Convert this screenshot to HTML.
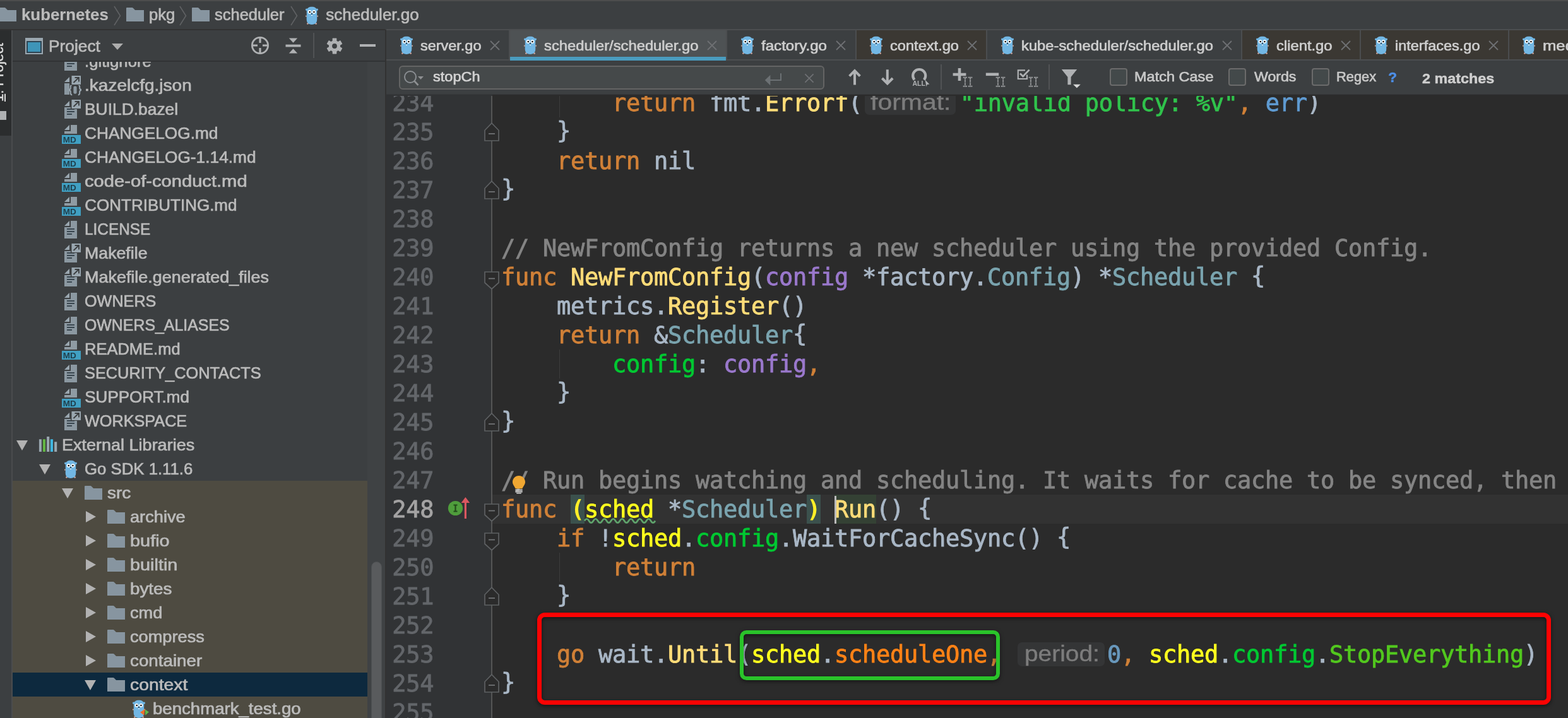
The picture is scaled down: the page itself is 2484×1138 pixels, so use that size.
<!DOCTYPE html><html><head><meta charset="utf-8"><title>scheduler.go - kubernetes</title><style>
*{box-sizing:border-box}
html,body{margin:0;padding:0;background:#2b2b2b}
body{width:2484px;height:1138px;overflow:hidden;position:relative;font-family:"Liberation Sans",sans-serif;color:#bbbbbb}
#root{position:absolute;left:0;top:0;width:2484px;height:1138px;overflow:hidden;will-change:transform}
.a{position:absolute}
.t{position:absolute;white-space:pre;line-height:30px;height:30px;font-size:26px;color:#bbbbbb;transform-origin:0 0}
.ln{position:absolute;left:611.3px;width:76px;text-align:right;font:37px/46px "DejaVu Sans Mono","Liberation Mono",monospace;letter-spacing:-0.276px;color:#63666a;height:46px;white-space:pre;-webkit-text-stroke:0.8px #63666a}
.cl{position:absolute;left:794px;font:37px/46px "DejaVu Sans Mono","Liberation Mono",monospace;letter-spacing:-0.276px;color:#a9b7c6;height:46px;white-space:pre;-webkit-text-stroke:0.85px}
.k{color:#d08037}.f{color:#ffdc78}.s{color:#30c34c}.c{color:#848484}.p{color:#9a78cc}.ty{color:#7aa4af}
.fd{color:#00c832}.r{color:#ffff1e}.so{color:#ff8216}.se{color:#52c81e}.n{color:#6897bb}.e{color:#5f9bd2}
.cl i{font-style:normal;position:relative;top:-2px}
.br{color:#ffef28;font-weight:bold;-webkit-text-stroke:0}
.hint{display:inline-block;position:relative;height:38px;vertical-align:top;margin-top:3px;background:#343536;border-radius:7px;letter-spacing:0;-webkit-text-stroke:0}
.hint b{position:absolute;left:0;top:-1px;font:normal 35px/38px "Liberation Sans",sans-serif;color:#7c7c7c;-webkit-text-stroke:0.4px #7c7c7c;transform-origin:0 0;white-space:pre}
</style></head><body><div id="root">
<div class="a" style="left:0;top:47px;width:610px;height:1091px;background:#3c3f41"></div>
<div class="a" style="left:20px;top:762px;width:562px;height:376px;background:#4e4b41"></div>
<div class="a" style="left:20px;top:1066px;width:562px;height:38px;background:#0d293e"></div>
<svg class="a" style="left:96px;top:80px" width="36" height="36" viewBox="-6 -4 36 36"><path d="M0 8L8 0V8Z" fill="#9aa7b0"/><path d="M10 0H20V28H0V10H10Z" fill="#8b98a1"/><rect x="4" y="12" width="12" height="1.9" fill="#36434c"/><rect x="4" y="16" width="12" height="1.9" fill="#36434c"/><rect x="4" y="20" width="8" height="1.9" fill="#36434c"/></svg>
<div class="t" style="left:134.28px;top:82.29px;font-size:26px;transform:scaleX(0.9894);-webkit-text-stroke:0.7px #bbbbbb;">.gitignore</div>
<svg class="a" style="left:96px;top:118px" width="36" height="36" viewBox="-6 -4 36 36"><path d="M0 8L8 0V8Z" fill="#9aa7b0"/><path d="M10 0H20V10H8V28H0V10H10Z" fill="#8b98a1"/><path d="M12.2 12.6C10.2 12.6 9.8 13.8 9.8 15.4V17.6C9.8 18.8 9.2 19.6 8 19.8V21.2C9.2 21.4 9.8 22.2 9.8 23.4V25.6C9.8 27.2 10.2 28.4 12.2 28.4" stroke="#9aa7b0" stroke-width="2" fill="none"/><path d="M21.8 12.6C23.8 12.6 24.2 13.8 24.2 15.4V17.6C24.2 18.8 24.8 19.6 26 19.8V21.2C24.8 21.4 24.2 22.2 24.2 23.4V25.6C24.2 27.2 23.8 28.4 21.8 28.4" stroke="#9aa7b0" stroke-width="2" fill="none"/><rect x="14.4" y="14.4" width="5.2" height="12.4" rx="2.4" fill="#8b98a1"/><rect x="10" y="-3" width="17" height="16" fill="#3c3f41"/><rect x="11.5" y="-2" width="14.5" height="14" fill="#9aa7b0"/><path d="M14.5 9L22.5 1.2M16.5 1H23V7.5" stroke="#3c3f41" stroke-width="1.9" fill="none"/></svg>
<div class="t" style="left:134.28px;top:120.29px;font-size:26px;transform:scaleX(1.0776);-webkit-text-stroke:0.7px #bbbbbb;">.kazelcfg.json</div>
<svg class="a" style="left:96px;top:156px" width="36" height="36" viewBox="-6 -4 36 36"><path d="M0 8L8 0V8Z" fill="#9aa7b0"/><path d="M10 0H20V28H0V10H10Z" fill="#8b98a1"/><rect x="4" y="12" width="12" height="1.9" fill="#36434c"/><rect x="4" y="16" width="12" height="1.9" fill="#36434c"/><rect x="4" y="20" width="8" height="1.9" fill="#36434c"/><rect x="10" y="-3" width="17" height="16" fill="#3c3f41"/><rect x="11.5" y="-2" width="14.5" height="14" fill="#9aa7b0"/><path d="M14.5 9L22.5 1.2M16.5 1H23V7.5" stroke="#3c3f41" stroke-width="1.9" fill="none"/></svg>
<div class="t" style="left:134.28px;top:158.29px;font-size:26px;transform:scaleX(1.0151);-webkit-text-stroke:0.7px #bbbbbb;">BUILD.bazel</div>
<svg class="a" style="left:96px;top:194px" width="36" height="36" viewBox="-6 -4 36 36"><path d="M0 8L8 0V8Z" fill="#9aa7b0"/><path d="M10 0H20V14H0V10H10Z" fill="#8f9ba3"/><rect x="-4" y="16" width="30" height="14" fill="#40a0c3"/><text x="-2.2" y="27.6" font-family="Liberation Sans,sans-serif" font-weight="bold" font-size="13.5" fill="#20414f" textLength="21" lengthAdjust="spacingAndGlyphs">MD</text></svg>
<div class="t" style="left:134.28px;top:196.29px;font-size:26px;transform:scaleX(1.0093);-webkit-text-stroke:0.7px #bbbbbb;">CHANGELOG.md</div>
<svg class="a" style="left:96px;top:232px" width="36" height="36" viewBox="-6 -4 36 36"><path d="M0 8L8 0V8Z" fill="#9aa7b0"/><path d="M10 0H20V14H0V10H10Z" fill="#8f9ba3"/><rect x="-4" y="16" width="30" height="14" fill="#40a0c3"/><text x="-2.2" y="27.6" font-family="Liberation Sans,sans-serif" font-weight="bold" font-size="13.5" fill="#20414f" textLength="21" lengthAdjust="spacingAndGlyphs">MD</text></svg>
<div class="t" style="left:134.28px;top:234.29px;font-size:26px;transform:scaleX(1.0104);-webkit-text-stroke:0.7px #bbbbbb;">CHANGELOG-1.14.md</div>
<svg class="a" style="left:96px;top:270px" width="36" height="36" viewBox="-6 -4 36 36"><path d="M0 8L8 0V8Z" fill="#9aa7b0"/><path d="M10 0H20V14H0V10H10Z" fill="#8f9ba3"/><rect x="-4" y="16" width="30" height="14" fill="#40a0c3"/><text x="-2.2" y="27.6" font-family="Liberation Sans,sans-serif" font-weight="bold" font-size="13.5" fill="#20414f" textLength="21" lengthAdjust="spacingAndGlyphs">MD</text></svg>
<div class="t" style="left:134.28px;top:272.29px;font-size:26px;transform:scaleX(1.1211);-webkit-text-stroke:0.7px #bbbbbb;">code-of-conduct.md</div>
<svg class="a" style="left:96px;top:308px" width="36" height="36" viewBox="-6 -4 36 36"><path d="M0 8L8 0V8Z" fill="#9aa7b0"/><path d="M10 0H20V14H0V10H10Z" fill="#8f9ba3"/><rect x="-4" y="16" width="30" height="14" fill="#40a0c3"/><text x="-2.2" y="27.6" font-family="Liberation Sans,sans-serif" font-weight="bold" font-size="13.5" fill="#20414f" textLength="21" lengthAdjust="spacingAndGlyphs">MD</text></svg>
<div class="t" style="left:134.28px;top:310.29px;font-size:26px;-webkit-text-stroke:0.7px #bbbbbb;">CONTRIBUTING.md</div>
<svg class="a" style="left:96px;top:346px" width="36" height="36" viewBox="-6 -4 36 36"><path d="M0 8L8 0V8Z" fill="#9aa7b0"/><path d="M10 0H20V28H0V10H10Z" fill="#8b98a1"/><rect x="4" y="12" width="12" height="1.9" fill="#36434c"/><rect x="4" y="16" width="12" height="1.9" fill="#36434c"/><rect x="4" y="20" width="8" height="1.9" fill="#36434c"/></svg>
<div class="t" style="left:134.28px;top:348.29px;font-size:26px;transform:scaleX(0.9382);-webkit-text-stroke:0.7px #bbbbbb;">LICENSE</div>
<svg class="a" style="left:96px;top:384px" width="36" height="36" viewBox="-6 -4 36 36"><path d="M0 8L8 0V8Z" fill="#9aa7b0"/><path d="M10 0H20V28H0V10H10Z" fill="#8b98a1"/><rect x="4" y="12" width="12" height="1.9" fill="#36434c"/><rect x="4" y="16" width="12" height="1.9" fill="#36434c"/><rect x="4" y="20" width="8" height="1.9" fill="#36434c"/><rect x="10" y="-3" width="17" height="16" fill="#3c3f41"/><rect x="11.5" y="-2" width="14.5" height="14" fill="#9aa7b0"/><path d="M14.5 9L22.5 1.2M16.5 1H23V7.5" stroke="#3c3f41" stroke-width="1.9" fill="none"/></svg>
<div class="t" style="left:134.28px;top:386.29px;font-size:26px;transform:scaleX(1.0282);-webkit-text-stroke:0.7px #bbbbbb;">Makefile</div>
<svg class="a" style="left:96px;top:422px" width="36" height="36" viewBox="-6 -4 36 36"><path d="M0 8L8 0V8Z" fill="#9aa7b0"/><path d="M10 0H20V28H0V10H10Z" fill="#8b98a1"/><rect x="4" y="12" width="12" height="1.9" fill="#36434c"/><rect x="4" y="16" width="12" height="1.9" fill="#36434c"/><rect x="4" y="20" width="8" height="1.9" fill="#36434c"/><rect x="10" y="-3" width="17" height="16" fill="#3c3f41"/><rect x="11.5" y="-2" width="14.5" height="14" fill="#9aa7b0"/><path d="M14.5 9L22.5 1.2M16.5 1H23V7.5" stroke="#3c3f41" stroke-width="1.9" fill="none"/></svg>
<div class="t" style="left:134.28px;top:424.29px;font-size:26px;transform:scaleX(1.0363);-webkit-text-stroke:0.7px #bbbbbb;">Makefile.generated_files</div>
<svg class="a" style="left:96px;top:460px" width="36" height="36" viewBox="-6 -4 36 36"><path d="M0 8L8 0V8Z" fill="#9aa7b0"/><path d="M10 0H20V28H0V10H10Z" fill="#8b98a1"/><rect x="4" y="12" width="12" height="1.9" fill="#36434c"/><rect x="4" y="16" width="12" height="1.9" fill="#36434c"/><rect x="4" y="20" width="8" height="1.9" fill="#36434c"/></svg>
<div class="t" style="left:134.28px;top:462.29px;font-size:26px;transform:scaleX(0.9692);-webkit-text-stroke:0.7px #bbbbbb;">OWNERS</div>
<svg class="a" style="left:96px;top:498px" width="36" height="36" viewBox="-6 -4 36 36"><path d="M0 8L8 0V8Z" fill="#9aa7b0"/><path d="M10 0H20V28H0V10H10Z" fill="#8b98a1"/><rect x="4" y="12" width="12" height="1.9" fill="#36434c"/><rect x="4" y="16" width="12" height="1.9" fill="#36434c"/><rect x="4" y="20" width="8" height="1.9" fill="#36434c"/></svg>
<div class="t" style="left:134.28px;top:500.29px;font-size:26px;transform:scaleX(0.9572);-webkit-text-stroke:0.7px #bbbbbb;">OWNERS_ALIASES</div>
<svg class="a" style="left:96px;top:536px" width="36" height="36" viewBox="-6 -4 36 36"><path d="M0 8L8 0V8Z" fill="#9aa7b0"/><path d="M10 0H20V14H0V10H10Z" fill="#8f9ba3"/><rect x="-4" y="16" width="30" height="14" fill="#40a0c3"/><text x="-2.2" y="27.6" font-family="Liberation Sans,sans-serif" font-weight="bold" font-size="13.5" fill="#20414f" textLength="21" lengthAdjust="spacingAndGlyphs">MD</text></svg>
<div class="t" style="left:134.28px;top:538.29px;font-size:26px;transform:scaleX(0.9807);-webkit-text-stroke:0.7px #bbbbbb;">README.md</div>
<svg class="a" style="left:96px;top:574px" width="36" height="36" viewBox="-6 -4 36 36"><path d="M0 8L8 0V8Z" fill="#9aa7b0"/><path d="M10 0H20V28H0V10H10Z" fill="#8b98a1"/><rect x="4" y="12" width="12" height="1.9" fill="#36434c"/><rect x="4" y="16" width="12" height="1.9" fill="#36434c"/><rect x="4" y="20" width="8" height="1.9" fill="#36434c"/></svg>
<div class="t" style="left:134.28px;top:576.29px;font-size:26px;transform:scaleX(0.9746);-webkit-text-stroke:0.7px #bbbbbb;">SECURITY_CONTACTS</div>
<svg class="a" style="left:96px;top:612px" width="36" height="36" viewBox="-6 -4 36 36"><path d="M0 8L8 0V8Z" fill="#9aa7b0"/><path d="M10 0H20V14H0V10H10Z" fill="#8f9ba3"/><rect x="-4" y="16" width="30" height="14" fill="#40a0c3"/><text x="-2.2" y="27.6" font-family="Liberation Sans,sans-serif" font-weight="bold" font-size="13.5" fill="#20414f" textLength="21" lengthAdjust="spacingAndGlyphs">MD</text></svg>
<div class="t" style="left:134.28px;top:614.29px;font-size:26px;-webkit-text-stroke:0.7px #bbbbbb;">SUPPORT.md</div>
<svg class="a" style="left:96px;top:650px" width="36" height="36" viewBox="-6 -4 36 36"><path d="M0 8L8 0V8Z" fill="#9aa7b0"/><path d="M10 0H20V28H0V10H10Z" fill="#8b98a1"/><rect x="4" y="12" width="12" height="1.9" fill="#36434c"/><rect x="4" y="16" width="12" height="1.9" fill="#36434c"/><rect x="4" y="20" width="8" height="1.9" fill="#36434c"/><rect x="10" y="-3" width="17" height="16" fill="#3c3f41"/><rect x="11.5" y="-2" width="14.5" height="14" fill="#9aa7b0"/><path d="M14.5 9L22.5 1.2M16.5 1H23V7.5" stroke="#3c3f41" stroke-width="1.9" fill="none"/></svg>
<div class="t" style="left:134.28px;top:652.29px;font-size:26px;transform:scaleX(0.9707);-webkit-text-stroke:0.7px #bbbbbb;">WORKSPACE</div>
<svg class="a" style="left:26px;top:698px" width="18" height="16" viewBox="0 0 18 16"><path d="M0 0H18L9 16Z" fill="#b2b2b2"/></svg>
<svg class="a" style="left:61px;top:691px" width="30" height="26" viewBox="61 691 30 26"><rect x="61.9" y="696.2" width="4" height="19.8" fill="#9aa7b0"/><rect x="67.9" y="696.2" width="4.1" height="19.8" fill="#62b543"/><rect x="74.1" y="692" width="4.1" height="24" fill="#9aa7b0"/><rect x="79.9" y="696.2" width="4.1" height="19.8" fill="#40b6e0"/><rect x="86.1" y="700.3" width="4.1" height="15.7" fill="#9aa7b0"/></svg>
<div class="t" style="left:98.28px;top:690.29px;font-size:26px;transform:scaleX(1.0388);-webkit-text-stroke:0.7px #bbbbbb;">External Libraries</div>
<svg class="a" style="left:62px;top:736px" width="18" height="16" viewBox="0 0 18 16"><path d="M0 0H18L9 16Z" fill="#b2b2b2"/></svg>
<svg class="a" style="left:102px;top:729px" width="20.0" height="30.0" viewBox="0 0 20 30">
<circle cx="1.7" cy="5.3" r="1.7" fill="#72b7e4"/><circle cx="18.3" cy="5.3" r="1.7" fill="#72b7e4"/>
<ellipse cx="0.9" cy="15.6" rx="0.95" ry="1.2" fill="#d9aca2"/><ellipse cx="19.1" cy="15.6" rx="0.95" ry="1.2" fill="#d9aca2"/>
<ellipse cx="3.4" cy="27.6" rx="1.3" ry="1.25" fill="#d9aca2"/><ellipse cx="16.6" cy="27.6" rx="1.3" ry="1.25" fill="#d9aca2"/>
<path d="M10 0.8C5.5 0.8 2.3 2.8 1.9 6.5C1.7 9 1.9 12 1.8 15.5C1.7 19 1.6 21 2 23.3C2.8 27 5.8 28.9 10 28.9C14.2 28.9 17.2 27 18 23.3C18.4 21 18.3 19 18.2 15.5C18.1 12 18.3 9 18.1 6.5C17.7 2.8 14.5 0.8 10 0.8Z" fill="#72b7e4"/>
<circle cx="6.55" cy="8.9" r="2.8" fill="#fff"/><circle cx="13.45" cy="8.9" r="2.8" fill="#fff"/>
<circle cx="6.75" cy="9.05" r="1.3" fill="#0a0a0a"/><circle cx="13.4" cy="9.05" r="1.3" fill="#0a0a0a"/>
<ellipse cx="10" cy="11.9" rx="1.0" ry="0.85" fill="#1c1c24"/><rect x="9" y="13.7" width="2.1" height="1.3" rx="0.4" fill="#f4f4f0"/>
</svg>
<div class="t" style="left:134.28px;top:728.29px;font-size:26px;transform:scaleX(0.9906);-webkit-text-stroke:0.7px #bbbbbb;">Go SDK 1.11.6</div>
<svg class="a" style="left:98px;top:774px" width="18" height="16" viewBox="0 0 18 16"><path d="M0 0H18L9 16Z" fill="#b2b2b2"/></svg>
<svg class="a" style="left:134px;top:770px" width="28" height="22" viewBox="0 0 28 22"><path d="M0 1Q0 0 1 0H9.2Q10.2 0 10.8 0.7L14 4H28V22H0Z" fill="#8795a0"/></svg>
<div class="t" style="left:170.28px;top:766.29px;font-size:26px;transform:scaleX(1.0782);-webkit-text-stroke:0.7px #bbbbbb;">src</div>
<svg class="a" style="left:136px;top:810px" width="16" height="18" viewBox="0 0 16 18"><path d="M0 0L16 9L0 18Z" fill="#b2b2b2"/></svg>
<svg class="a" style="left:170px;top:808px" width="28" height="22" viewBox="0 0 28 22"><path d="M0 1Q0 0 1 0H9.2Q10.2 0 10.8 0.7L14 4H28V22H0Z" fill="#8795a0"/></svg>
<div class="t" style="left:206.28px;top:804.29px;font-size:26px;transform:scaleX(1.0458);-webkit-text-stroke:0.7px #bbbbbb;">archive</div>
<svg class="a" style="left:136px;top:848px" width="16" height="18" viewBox="0 0 16 18"><path d="M0 0L16 9L0 18Z" fill="#b2b2b2"/></svg>
<svg class="a" style="left:170px;top:846px" width="28" height="22" viewBox="0 0 28 22"><path d="M0 1Q0 0 1 0H9.2Q10.2 0 10.8 0.7L14 4H28V22H0Z" fill="#8795a0"/></svg>
<div class="t" style="left:206.28px;top:842.29px;font-size:26px;transform:scaleX(1.1118);-webkit-text-stroke:0.7px #bbbbbb;">bufio</div>
<svg class="a" style="left:136px;top:886px" width="16" height="18" viewBox="0 0 16 18"><path d="M0 0L16 9L0 18Z" fill="#b2b2b2"/></svg>
<svg class="a" style="left:170px;top:884px" width="28" height="22" viewBox="0 0 28 22"><path d="M0 1Q0 0 1 0H9.2Q10.2 0 10.8 0.7L14 4H28V22H0Z" fill="#8795a0"/></svg>
<div class="t" style="left:206.28px;top:880.29px;font-size:26px;transform:scaleX(1.1098);-webkit-text-stroke:0.7px #bbbbbb;">builtin</div>
<svg class="a" style="left:136px;top:924px" width="16" height="18" viewBox="0 0 16 18"><path d="M0 0L16 9L0 18Z" fill="#b2b2b2"/></svg>
<svg class="a" style="left:170px;top:922px" width="28" height="22" viewBox="0 0 28 22"><path d="M0 1Q0 0 1 0H9.2Q10.2 0 10.8 0.7L14 4H28V22H0Z" fill="#8795a0"/></svg>
<div class="t" style="left:206.28px;top:918.29px;font-size:26px;transform:scaleX(1.0680);-webkit-text-stroke:0.7px #bbbbbb;">bytes</div>
<svg class="a" style="left:136px;top:962px" width="16" height="18" viewBox="0 0 16 18"><path d="M0 0L16 9L0 18Z" fill="#b2b2b2"/></svg>
<svg class="a" style="left:170px;top:960px" width="28" height="22" viewBox="0 0 28 22"><path d="M0 1Q0 0 1 0H9.2Q10.2 0 10.8 0.7L14 4H28V22H0Z" fill="#8795a0"/></svg>
<div class="t" style="left:206.28px;top:956.29px;font-size:26px;transform:scaleX(1.0443);-webkit-text-stroke:0.7px #bbbbbb;">cmd</div>
<svg class="a" style="left:136px;top:1000px" width="16" height="18" viewBox="0 0 16 18"><path d="M0 0L16 9L0 18Z" fill="#b2b2b2"/></svg>
<svg class="a" style="left:170px;top:998px" width="28" height="22" viewBox="0 0 28 22"><path d="M0 1Q0 0 1 0H9.2Q10.2 0 10.8 0.7L14 4H28V22H0Z" fill="#8795a0"/></svg>
<div class="t" style="left:206.28px;top:994.29px;font-size:26px;transform:scaleX(1.0459);-webkit-text-stroke:0.7px #bbbbbb;">compress</div>
<svg class="a" style="left:136px;top:1038px" width="16" height="18" viewBox="0 0 16 18"><path d="M0 0L16 9L0 18Z" fill="#b2b2b2"/></svg>
<svg class="a" style="left:170px;top:1036px" width="28" height="22" viewBox="0 0 28 22"><path d="M0 1Q0 0 1 0H9.2Q10.2 0 10.8 0.7L14 4H28V22H0Z" fill="#8795a0"/></svg>
<div class="t" style="left:206.28px;top:1032.29px;font-size:26px;transform:scaleX(1.0678);-webkit-text-stroke:0.7px #bbbbbb;">container</div>
<svg class="a" style="left:134px;top:1078px" width="18" height="16" viewBox="0 0 18 16"><path d="M0 0H18L9 16Z" fill="#b2b2b2"/></svg>
<svg class="a" style="left:170px;top:1074px" width="28" height="22" viewBox="0 0 28 22"><path d="M0 1Q0 0 1 0H9.2Q10.2 0 10.8 0.7L14 4H28V22H0Z" fill="#8795a0"/></svg>
<div class="t" style="left:206.28px;top:1070.29px;font-size:26px;transform:scaleX(1.0894);-webkit-text-stroke:0.7px #bbbbbb;">context</div>
<svg class="a" style="left:210px;top:1109px" width="20.0" height="30.0" viewBox="0 0 20 30">
<circle cx="1.7" cy="5.3" r="1.7" fill="#72b7e4"/><circle cx="18.3" cy="5.3" r="1.7" fill="#72b7e4"/>
<ellipse cx="0.9" cy="15.6" rx="0.95" ry="1.2" fill="#d9aca2"/><ellipse cx="19.1" cy="15.6" rx="0.95" ry="1.2" fill="#d9aca2"/>
<ellipse cx="3.4" cy="27.6" rx="1.3" ry="1.25" fill="#d9aca2"/><ellipse cx="16.6" cy="27.6" rx="1.3" ry="1.25" fill="#d9aca2"/>
<path d="M10 0.8C5.5 0.8 2.3 2.8 1.9 6.5C1.7 9 1.9 12 1.8 15.5C1.7 19 1.6 21 2 23.3C2.8 27 5.8 28.9 10 28.9C14.2 28.9 17.2 27 18 23.3C18.4 21 18.3 19 18.2 15.5C18.1 12 18.3 9 18.1 6.5C17.7 2.8 14.5 0.8 10 0.8Z" fill="#72b7e4"/>
<circle cx="6.55" cy="8.9" r="2.8" fill="#fff"/><circle cx="13.45" cy="8.9" r="2.8" fill="#fff"/>
<circle cx="6.75" cy="9.05" r="1.3" fill="#0a0a0a"/><circle cx="13.4" cy="9.05" r="1.3" fill="#0a0a0a"/>
<ellipse cx="10" cy="11.9" rx="1.0" ry="0.85" fill="#1c1c24"/><rect x="9" y="13.7" width="2.1" height="1.3" rx="0.4" fill="#f4f4f0"/>
</svg>
<svg class="a" style="left:220px;top:1120px" width="18" height="18" viewBox="220 1120 18 18"><path d="M222 1128.9L229.7 1123.8L228.3 1133.8Z" fill="#ee6f2d"/><path d="M229.9 1124.6L236 1128.6L230.2 1133.8Z" fill="#5fb84a"/></svg>
<div class="t" style="left:242.28px;top:1108.29px;font-size:26px;transform:scaleX(1.0612);-webkit-text-stroke:0.7px #bbbbbb;">benchmark_test.go</div>
<div class="a" style="left:582px;top:98px;width:28px;height:1040px;background:#3f4244"></div>
<div class="a" style="left:587.5px;top:890px;width:17px;height:260px;background:#595b5d;border-radius:9px;border:1px solid #4c4f51"></div>
<div class="a" style="left:0;top:47px;width:18px;height:1091px;background:#3c3f41"></div>
<div class="a" style="left:0;top:47px;width:18px;height:168px;background:#2b2d2e;overflow:hidden"><div class="a" style="left:-14px;top:113.5px;width:120px;height:24px;line-height:24px;font-size:22px;color:#dadada;-webkit-text-stroke:0.5px #dadada;white-space:pre;transform-origin:0 0;transform:rotate(-90deg)"><u>1</u>: Project</div><div class="a" style="left:0;top:129px;width:10px;height:14px;background:#afb1b3"></div></div>
<div class="a" style="left:18px;top:47px;width:2px;height:1091px;background:#4a4c4e"></div>
<div class="a" style="left:0;top:0;width:2484px;height:46px;background:#3c3f41"></div>
<div class="a" style="left:0;top:0;width:2484px;height:2px;background:#4d4d4d"></div>
<div class="a" style="left:0;top:46px;width:611px;height:1.5px;background:#323232"></div>
<svg class="a" style="left:-2px;top:12px" width="28" height="22" viewBox="0 0 28 22"><path d="M0 1Q0 0 1 0H9.2Q10.2 0 10.8 0.7L14 4H28V22H0Z" fill="#8795a0"/></svg>
<div class="t" style="left:33.58px;top:8.39px;font-size:26px;transform:scaleX(0.9932);font-weight:bold;-webkit-text-stroke:0.2px #bbbbbb;">kubernetes</div>
<svg class="a" style="left:180px;top:9px" width="12" height="32" viewBox="0 0 12 32"><path d="M1 1L10.5 16L1 31" stroke="#606264" stroke-width="1.6" fill="none"/></svg>
<svg class="a" style="left:200px;top:12px" width="28" height="22" viewBox="0 0 28 22"><path d="M0 1Q0 0 1 0H9.2Q10.2 0 10.8 0.7L14 4H28V22H0Z" fill="#8795a0"/></svg>
<div class="t" style="left:235.78px;top:8.39px;font-size:26px;transform:scaleX(0.9854);-webkit-text-stroke:0.7px #bbbbbb;">pkg</div>
<svg class="a" style="left:284px;top:9px" width="12" height="32" viewBox="0 0 12 32"><path d="M1 1L10.5 16L1 31" stroke="#606264" stroke-width="1.6" fill="none"/></svg>
<svg class="a" style="left:304px;top:12px" width="28" height="22" viewBox="0 0 28 22"><path d="M0 1Q0 0 1 0H9.2Q10.2 0 10.8 0.7L14 4H28V22H0Z" fill="#8795a0"/></svg>
<div class="t" style="left:339.78px;top:8.39px;font-size:26px;transform:scaleX(0.9805);-webkit-text-stroke:0.7px #bbbbbb;">scheduler</div>
<svg class="a" style="left:460px;top:9px" width="12" height="32" viewBox="0 0 12 32"><path d="M1 1L10.5 16L1 31" stroke="#606264" stroke-width="1.6" fill="none"/></svg>
<svg class="a" style="left:484px;top:10px" width="20.0" height="30.0" viewBox="0 0 20 30">
<circle cx="1.7" cy="5.3" r="1.7" fill="#72b7e4"/><circle cx="18.3" cy="5.3" r="1.7" fill="#72b7e4"/>
<ellipse cx="0.9" cy="15.6" rx="0.95" ry="1.2" fill="#d9aca2"/><ellipse cx="19.1" cy="15.6" rx="0.95" ry="1.2" fill="#d9aca2"/>
<ellipse cx="3.4" cy="27.6" rx="1.3" ry="1.25" fill="#d9aca2"/><ellipse cx="16.6" cy="27.6" rx="1.3" ry="1.25" fill="#d9aca2"/>
<path d="M10 0.8C5.5 0.8 2.3 2.8 1.9 6.5C1.7 9 1.9 12 1.8 15.5C1.7 19 1.6 21 2 23.3C2.8 27 5.8 28.9 10 28.9C14.2 28.9 17.2 27 18 23.3C18.4 21 18.3 19 18.2 15.5C18.1 12 18.3 9 18.1 6.5C17.7 2.8 14.5 0.8 10 0.8Z" fill="#72b7e4"/>
<circle cx="6.55" cy="8.9" r="2.8" fill="#fff"/><circle cx="13.45" cy="8.9" r="2.8" fill="#fff"/>
<circle cx="6.75" cy="9.05" r="1.3" fill="#0a0a0a"/><circle cx="13.4" cy="9.05" r="1.3" fill="#0a0a0a"/>
<ellipse cx="10" cy="11.9" rx="1.0" ry="0.85" fill="#1c1c24"/><rect x="9" y="13.7" width="2.1" height="1.3" rx="0.4" fill="#f4f4f0"/>
</svg>
<div class="t" style="left:516.28px;top:8.39px;font-size:26px;-webkit-text-stroke:0.7px #bbbbbb;">scheduler.go</div>
<div class="a" style="left:20px;top:47.5px;width:590px;height:49px;background:#3c3f41"></div>
<div class="a" style="left:20px;top:96px;width:590px;height:2px;background:#313335"></div>
<svg class="a" style="left:40px;top:60px" width="28" height="26" viewBox="0 0 28 26"><rect x="0" y="0" width="28" height="26" fill="#9aa7b0"/><rect x="2" y="5" width="24" height="19" fill="#2d4452"/><rect x="4" y="7" width="20" height="15" fill="#3e95b8"/></svg>
<div class="t" style="left:77.28px;top:57.99px;font-size:26px;transform:scaleX(1.0119);-webkit-text-stroke:0.7px #bbbbbb;">Project</div>
<svg class="a" style="left:177px;top:69px" width="18" height="10" viewBox="0 0 18 10"><path d="M0 0H18L9 10Z" fill="#adadad"/></svg>
<svg class="a" style="left:397px;top:57px" width="30" height="30" viewBox="0 0 30 30"><circle cx="15" cy="15" r="12.6" stroke="#afb1b3" stroke-width="2.8" fill="none"/><path d="M15 2V11M15 19V28M2 15H11M19 15H28" stroke="#afb1b3" stroke-width="3.2"/></svg>
<svg class="a" style="left:451.5px;top:59px" width="25" height="27" viewBox="0 0 26 28"><path d="M6 1.5H20L13 9Z" fill="#afb1b3"/><rect x="0.5" y="12" width="25" height="4" fill="#afb1b3"/><path d="M6 26.5H20L13 19Z" fill="#afb1b3"/></svg>
<div class="a" style="left:496px;top:52px;width:2px;height:40px;background:#515355"></div>
<svg class="a" style="left:517px;top:59.6px" width="26" height="26" viewBox="-14 -14 28 28"><g fill="#afb1b3"><rect x="-3.6" y="-13.4" width="7.2" height="8" rx="0.8" transform="rotate(0)"/><rect x="-3.6" y="-13.4" width="7.2" height="8" rx="0.8" transform="rotate(60)"/><rect x="-3.6" y="-13.4" width="7.2" height="8" rx="0.8" transform="rotate(120)"/><rect x="-3.6" y="-13.4" width="7.2" height="8" rx="0.8" transform="rotate(180)"/><rect x="-3.6" y="-13.4" width="7.2" height="8" rx="0.8" transform="rotate(240)"/><rect x="-3.6" y="-13.4" width="7.2" height="8" rx="0.8" transform="rotate(300)"/></g><circle r="7" stroke="#afb1b3" stroke-width="5.6" fill="none"/></svg>
<div class="a" style="left:570px;top:70px;width:24.5px;height:4px;background:#afb1b3"></div>
<div class="a" style="left:610px;top:150px;width:1874px;height:988px;background:#2b2b2b"></div>
<div class="a" style="left:610px;top:150px;width:169px;height:988px;background:#313335"></div>
<div class="a" style="left:779px;top:784px;width:1705px;height:46px;background:#323232"></div>
<div class="a" style="left:778px;top:150px;width:2px;height:988px;background:#555555"></div>
<div class="ln" style="top:141px;">234</div>
<div class="ln" style="top:187px;">235</div>
<div class="ln" style="top:233px;">236</div>
<div class="ln" style="top:279px;">237</div>
<div class="ln" style="top:325px;">238</div>
<div class="ln" style="top:371px;">239</div>
<div class="ln" style="top:417px;">240</div>
<div class="ln" style="top:463px;">241</div>
<div class="ln" style="top:509px;">242</div>
<div class="ln" style="top:555px;">243</div>
<div class="ln" style="top:601px;">244</div>
<div class="ln" style="top:647px;">245</div>
<div class="ln" style="top:693px;">246</div>
<div class="ln" style="top:739px;">247</div>
<div class="ln" style="top:785px;color:#a4a3a3;-webkit-text-stroke-color:#a4a3a3;">248</div>
<div class="ln" style="top:831px;">249</div>
<div class="ln" style="top:877px;">250</div>
<div class="ln" style="top:923px;">251</div>
<div class="ln" style="top:969px;">252</div>
<div class="ln" style="top:1015px;">253</div>
<div class="ln" style="top:1061px;">254</div>
<div class="ln" style="top:1107px;">255</div>
<div class="a" style="left:885.5px;top:140px;width:1px;height:46px;background:#3c3c3c"></div>
<div class="a" style="left:885.5px;top:554px;width:1px;height:46px;background:#3c3c3c"></div>
<div class="a" style="left:885.5px;top:876px;width:1px;height:46px;background:#3c3c3c"></div>
<div class="a" style="left:904px;top:784px;width:22px;height:46px;background:#3b514d"></div>
<div class="a" style="left:1278px;top:784px;width:22px;height:46px;background:#3b514d"></div>
<div class="a" style="left:1322px;top:784px;width:66px;height:46px;background:#344134"></div>
<div class="cl" style="top:141px">        <span class="k">return</span> fmt.<span class="f">Errorf</span>(<span class="hint" style="width:144.5px;margin-left:3.7px;margin-right:6.5px"><b style="left:9.5px;transform:scaleX(1.17)">format:</b></span><span class="s">&quot;invalid policy: %v&quot;</span><span class="k">,</span> <span class="e">err</span>)</div>
<div class="cl" style="top:187px">    <i>}</i></div>
<div class="cl" style="top:233px">    <span class="k">return</span> nil</div>
<div class="cl" style="top:279px"><i>}</i></div>
<div class="cl" style="top:371px"><span class="c">// NewFromConfig returns a new scheduler using the provided Config.</span></div>
<div class="cl" style="top:417px"><span class="k">func</span> <span class="f">NewFromConfig</span>(<span class="p">config</span> *factory.<span class="ty">Config</span>) *<span class="ty">Scheduler</span> <i>{</i></div>
<div class="cl" style="top:463px">    metrics.<span class="f">Register</span>()</div>
<div class="cl" style="top:509px">    <span class="k">return</span> &amp;<span class="ty">Scheduler</span><i>{</i></div>
<div class="cl" style="top:555px">        <span class="fd">config</span>: <span class="p">config</span><span class="k">,</span></div>
<div class="cl" style="top:601px">    <i>}</i></div>
<div class="cl" style="top:647px"><i>}</i></div>
<div class="cl" style="top:739px"><span class="c">// Run begins watching and scheduling. It waits for cache to be synced, then</span></div>
<div class="cl" style="top:785px"><span class="k">func</span> <span class="br">(</span><span class="r">sched</span> *<span class="ty">Scheduler</span><span class="br">)</span> <span class="f">Run</span>() <i>{</i></div>
<div class="cl" style="top:831px">    <span class="k">if</span> !<span class="r">sched</span>.<span class="fd">config</span>.WaitForCacheSync() <i>{</i></div>
<div class="cl" style="top:877px">        <span class="k">return</span></div>
<div class="cl" style="top:923px">    <i>}</i></div>
<div class="cl" style="top:1015px">    <span class="k">go</span> wait.<span class="f">Until</span>(<span class="r">sched</span>.<span class="so">scheduleOne</span><span class="k">,</span> <span class="hint" style="width:138px;margin-left:4px;margin-right:4px"><b style="left:11px;transform:scaleX(1.11)">period:</b></span><span class="n">0</span><span class="k">,</span> <span class="r">sched</span>.<span class="fd">config</span>.<span class="se">StopEverything</span>)</div>
<div class="cl" style="top:1061px"><i>}</i></div>
<svg class="a" style="left:0;top:0" width="2484" height="1138"><path d="M926 825.5 q3.5 -6 7 0 q3.5 6 7 0 q3.5 -6 7 0 q3.5 6 7 0 q3.5 -6 7 0 q3.5 6 7 0 q3.5 -6 7 0 q3.5 6 7 0 q3.5 -6 7 0 q3.5 6 7 0 q3.5 -6 7 0 q3.5 6 7 0 q3.5 -6 7 0 q3.5 6 7 0 q3.5 -6 7 0 q3.5 6 7 0" stroke="#5fa46c" stroke-width="2.7" fill="none"/></svg>
<div class="a" style="left:1322px;top:786px;width:3px;height:44px;background:#bbbbbb"></div>
<svg class="a" style="left:767px;top:194px" width="24" height="30" viewBox="0 0 24 30"><path d="M1 29V12.5L12 1.2L23 12.5V29Z" fill="#2b2b2b" stroke="#5e6163" stroke-width="1.7"/><path d="M7 18H17" stroke="#747779" stroke-width="1.7"/></svg>
<svg class="a" style="left:767px;top:286px" width="24" height="30" viewBox="0 0 24 30"><path d="M1 29V12.5L12 1.2L23 12.5V29Z" fill="#2b2b2b" stroke="#5e6163" stroke-width="1.7"/><path d="M7 18H17" stroke="#747779" stroke-width="1.7"/></svg>
<svg class="a" style="left:767px;top:430px" width="24" height="29" viewBox="0 0 24 29"><path d="M1 1H23V18L12 28L1 18Z" fill="#2b2b2b" stroke="#5e6163" stroke-width="1.7"/><path d="M7 11.5H17" stroke="#747779" stroke-width="1.7"/></svg>
<svg class="a" style="left:767px;top:654px" width="24" height="30" viewBox="0 0 24 30"><path d="M1 29V12.5L12 1.2L23 12.5V29Z" fill="#2b2b2b" stroke="#5e6163" stroke-width="1.7"/><path d="M7 18H17" stroke="#747779" stroke-width="1.7"/></svg>
<svg class="a" style="left:767px;top:798px" width="24" height="29" viewBox="0 0 24 29"><path d="M1 1H23V18L12 28L1 18Z" fill="#2b2b2b" stroke="#5e6163" stroke-width="1.7"/><path d="M7 11.5H17" stroke="#747779" stroke-width="1.7"/></svg>
<svg class="a" style="left:767px;top:844px" width="24" height="29" viewBox="0 0 24 29"><path d="M1 1H23V18L12 28L1 18Z" fill="#2b2b2b" stroke="#5e6163" stroke-width="1.7"/><path d="M7 11.5H17" stroke="#747779" stroke-width="1.7"/></svg>
<svg class="a" style="left:767px;top:930px" width="24" height="30" viewBox="0 0 24 30"><path d="M1 29V12.5L12 1.2L23 12.5V29Z" fill="#2b2b2b" stroke="#5e6163" stroke-width="1.7"/><path d="M7 18H17" stroke="#747779" stroke-width="1.7"/></svg>
<svg class="a" style="left:767px;top:1068px" width="24" height="30" viewBox="0 0 24 30"><path d="M1 29V12.5L12 1.2L23 12.5V29Z" fill="#2b2b2b" stroke="#5e6163" stroke-width="1.7"/><path d="M7 18H17" stroke="#747779" stroke-width="1.7"/></svg>
<svg class="a" style="left:708px;top:786px" width="40" height="40" viewBox="0 0 40 40"><circle cx="13.5" cy="19.5" r="11.6" fill="#4f9d3c"/><path d="M10.5 14.5h6M13.5 14.5v10M10.5 24.5h6" stroke="#234a1a" stroke-width="2.2" fill="none"/><path d="M29.4 36V8" stroke="#db5860" stroke-width="3.2"/><path d="M22.6 11L29.4 2L36.2 11Z" fill="#db5860"/></svg>
<svg class="a" style="left:808px;top:750px" width="28" height="36" viewBox="0 0 28 36"><path d="M14 4C8.2 4 4 8.6 4 14C4 18.2 7 20.5 8.6 24.4H19.4C21 20.5 24 18.2 24 14C24 8.6 19.8 4 14 4Z" fill="#f0a732"/><rect x="8.3" y="25.6" width="11.4" height="2" fill="#d4d4d4"/><rect x="8.3" y="28.4" width="11.4" height="2" fill="#d4d4d4"/><rect x="10" y="31" width="8" height="1.6" rx="0.8" fill="#d4d4d4"/></svg>
<div class="a" style="left:850.7px;top:971px;width:1606px;height:146.2px;border:7.2px solid #fc0303;border-radius:12px;filter:drop-shadow(0 2px 3px rgba(0,0,0,.55))"></div>
<div class="a" style="left:1171.6px;top:999.2px;width:412px;height:79px;border:6.6px solid #2ac32a;border-radius:10.5px;filter:drop-shadow(0 2px 3px rgba(0,0,0,.55))"></div>
<div class="a" style="left:610px;top:46px;width:1874px;height:50px;background:#3c3f41"></div>
<div class="a" style="left:612px;top:45.8px;width:1872px;height:2px;background:#4c4e50"></div>
<div class="a" style="left:612px;top:94.2px;width:1872px;height:2px;background:#4c4e50"></div>
<svg class="a" style="left:634px;top:57px" width="20.0" height="30.0" viewBox="0 0 20 30">
<circle cx="1.7" cy="5.3" r="1.7" fill="#72b7e4"/><circle cx="18.3" cy="5.3" r="1.7" fill="#72b7e4"/>
<ellipse cx="0.9" cy="15.6" rx="0.95" ry="1.2" fill="#d9aca2"/><ellipse cx="19.1" cy="15.6" rx="0.95" ry="1.2" fill="#d9aca2"/>
<ellipse cx="3.4" cy="27.6" rx="1.3" ry="1.25" fill="#d9aca2"/><ellipse cx="16.6" cy="27.6" rx="1.3" ry="1.25" fill="#d9aca2"/>
<path d="M10 0.8C5.5 0.8 2.3 2.8 1.9 6.5C1.7 9 1.9 12 1.8 15.5C1.7 19 1.6 21 2 23.3C2.8 27 5.8 28.9 10 28.9C14.2 28.9 17.2 27 18 23.3C18.4 21 18.3 19 18.2 15.5C18.1 12 18.3 9 18.1 6.5C17.7 2.8 14.5 0.8 10 0.8Z" fill="#72b7e4"/>
<circle cx="6.55" cy="8.9" r="2.8" fill="#fff"/><circle cx="13.45" cy="8.9" r="2.8" fill="#fff"/>
<circle cx="6.75" cy="9.05" r="1.3" fill="#0a0a0a"/><circle cx="13.4" cy="9.05" r="1.3" fill="#0a0a0a"/>
<ellipse cx="10" cy="11.9" rx="1.0" ry="0.85" fill="#1c1c24"/><rect x="9" y="13.7" width="2.1" height="1.3" rx="0.4" fill="#f4f4f0"/>
</svg>
<div class="t" style="left:666.28px;top:57.77px;font-size:22.6px;transform:scaleX(1.0379);color:#cdcdcd;-webkit-text-stroke:0.7px #cdcdcd;">server.go</div>
<svg class="a" style="left:774.7px;top:63px" width="18" height="18" viewBox="-9 -9 18 18"><path d="M-7 -7L7 7M7 -7L-7 7" stroke="#6e7073" stroke-width="1.8"/></svg>
<div class="a" style="left:806px;top:47px;width:2px;height:48px;background:#4b4d4f"></div>
<div class="a" style="left:808px;top:47.5px;width:342px;height:46.8px;background:#4e5254"></div>
<svg class="a" style="left:830px;top:57px" width="20.0" height="30.0" viewBox="0 0 20 30">
<circle cx="1.7" cy="5.3" r="1.7" fill="#72b7e4"/><circle cx="18.3" cy="5.3" r="1.7" fill="#72b7e4"/>
<ellipse cx="0.9" cy="15.6" rx="0.95" ry="1.2" fill="#d9aca2"/><ellipse cx="19.1" cy="15.6" rx="0.95" ry="1.2" fill="#d9aca2"/>
<ellipse cx="3.4" cy="27.6" rx="1.3" ry="1.25" fill="#d9aca2"/><ellipse cx="16.6" cy="27.6" rx="1.3" ry="1.25" fill="#d9aca2"/>
<path d="M10 0.8C5.5 0.8 2.3 2.8 1.9 6.5C1.7 9 1.9 12 1.8 15.5C1.7 19 1.6 21 2 23.3C2.8 27 5.8 28.9 10 28.9C14.2 28.9 17.2 27 18 23.3C18.4 21 18.3 19 18.2 15.5C18.1 12 18.3 9 18.1 6.5C17.7 2.8 14.5 0.8 10 0.8Z" fill="#72b7e4"/>
<circle cx="6.55" cy="8.9" r="2.8" fill="#fff"/><circle cx="13.45" cy="8.9" r="2.8" fill="#fff"/>
<circle cx="6.75" cy="9.05" r="1.3" fill="#0a0a0a"/><circle cx="13.4" cy="9.05" r="1.3" fill="#0a0a0a"/>
<ellipse cx="10" cy="11.9" rx="1.0" ry="0.85" fill="#1c1c24"/><rect x="9" y="13.7" width="2.1" height="1.3" rx="0.4" fill="#f4f4f0"/>
</svg>
<div class="t" style="left:861.78px;top:57.77px;font-size:22.6px;transform:scaleX(1.0521);color:#cdcdcd;-webkit-text-stroke:0.7px #cdcdcd;">scheduler/scheduler.go</div>
<div class="a" style="left:808px;top:90px;width:342px;height:6px;background:#4a9cbf"></div>
<svg class="a" style="left:1118.7px;top:63px" width="18" height="18" viewBox="-9 -9 18 18"><path d="M-7 -7L7 7M7 -7L-7 7" stroke="#6e7073" stroke-width="1.8"/></svg>
<div class="a" style="left:1150px;top:47px;width:2px;height:48px;background:#4b4d4f"></div>
<svg class="a" style="left:1174px;top:57px" width="20.0" height="30.0" viewBox="0 0 20 30">
<circle cx="1.7" cy="5.3" r="1.7" fill="#72b7e4"/><circle cx="18.3" cy="5.3" r="1.7" fill="#72b7e4"/>
<ellipse cx="0.9" cy="15.6" rx="0.95" ry="1.2" fill="#d9aca2"/><ellipse cx="19.1" cy="15.6" rx="0.95" ry="1.2" fill="#d9aca2"/>
<ellipse cx="3.4" cy="27.6" rx="1.3" ry="1.25" fill="#d9aca2"/><ellipse cx="16.6" cy="27.6" rx="1.3" ry="1.25" fill="#d9aca2"/>
<path d="M10 0.8C5.5 0.8 2.3 2.8 1.9 6.5C1.7 9 1.9 12 1.8 15.5C1.7 19 1.6 21 2 23.3C2.8 27 5.8 28.9 10 28.9C14.2 28.9 17.2 27 18 23.3C18.4 21 18.3 19 18.2 15.5C18.1 12 18.3 9 18.1 6.5C17.7 2.8 14.5 0.8 10 0.8Z" fill="#72b7e4"/>
<circle cx="6.55" cy="8.9" r="2.8" fill="#fff"/><circle cx="13.45" cy="8.9" r="2.8" fill="#fff"/>
<circle cx="6.75" cy="9.05" r="1.3" fill="#0a0a0a"/><circle cx="13.4" cy="9.05" r="1.3" fill="#0a0a0a"/>
<ellipse cx="10" cy="11.9" rx="1.0" ry="0.85" fill="#1c1c24"/><rect x="9" y="13.7" width="2.1" height="1.3" rx="0.4" fill="#f4f4f0"/>
</svg>
<div class="t" style="left:1206.48px;top:57.77px;font-size:22.6px;transform:scaleX(1.0660);color:#cdcdcd;-webkit-text-stroke:0.7px #cdcdcd;">factory.go</div>
<svg class="a" style="left:1323.2px;top:63px" width="18" height="18" viewBox="-9 -9 18 18"><path d="M-7 -7L7 7M7 -7L-7 7" stroke="#6e7073" stroke-width="1.8"/></svg>
<div class="a" style="left:1354.5px;top:47px;width:2px;height:48px;background:#4b4d4f"></div>
<div class="a" style="left:1356.5px;top:47.5px;width:205.5px;height:46.8px;background:#3b3833"></div>
<svg class="a" style="left:1378px;top:57px" width="20.0" height="30.0" viewBox="0 0 20 30">
<circle cx="1.7" cy="5.3" r="1.7" fill="#72b7e4"/><circle cx="18.3" cy="5.3" r="1.7" fill="#72b7e4"/>
<ellipse cx="0.9" cy="15.6" rx="0.95" ry="1.2" fill="#d9aca2"/><ellipse cx="19.1" cy="15.6" rx="0.95" ry="1.2" fill="#d9aca2"/>
<ellipse cx="3.4" cy="27.6" rx="1.3" ry="1.25" fill="#d9aca2"/><ellipse cx="16.6" cy="27.6" rx="1.3" ry="1.25" fill="#d9aca2"/>
<path d="M10 0.8C5.5 0.8 2.3 2.8 1.9 6.5C1.7 9 1.9 12 1.8 15.5C1.7 19 1.6 21 2 23.3C2.8 27 5.8 28.9 10 28.9C14.2 28.9 17.2 27 18 23.3C18.4 21 18.3 19 18.2 15.5C18.1 12 18.3 9 18.1 6.5C17.7 2.8 14.5 0.8 10 0.8Z" fill="#72b7e4"/>
<circle cx="6.55" cy="8.9" r="2.8" fill="#fff"/><circle cx="13.45" cy="8.9" r="2.8" fill="#fff"/>
<circle cx="6.75" cy="9.05" r="1.3" fill="#0a0a0a"/><circle cx="13.4" cy="9.05" r="1.3" fill="#0a0a0a"/>
<ellipse cx="10" cy="11.9" rx="1.0" ry="0.85" fill="#1c1c24"/><rect x="9" y="13.7" width="2.1" height="1.3" rx="0.4" fill="#f4f4f0"/>
</svg>
<div class="t" style="left:1410.28px;top:57.77px;font-size:22.6px;transform:scaleX(1.0452);color:#cdcdcd;-webkit-text-stroke:0.7px #cdcdcd;">context.go</div>
<svg class="a" style="left:1530.7px;top:63px" width="18" height="18" viewBox="-9 -9 18 18"><path d="M-7 -7L7 7M7 -7L-7 7" stroke="#6e7073" stroke-width="1.8"/></svg>
<div class="a" style="left:1562px;top:47px;width:2px;height:48px;background:#4b4d4f"></div>
<svg class="a" style="left:1586px;top:57px" width="20.0" height="30.0" viewBox="0 0 20 30">
<circle cx="1.7" cy="5.3" r="1.7" fill="#72b7e4"/><circle cx="18.3" cy="5.3" r="1.7" fill="#72b7e4"/>
<ellipse cx="0.9" cy="15.6" rx="0.95" ry="1.2" fill="#d9aca2"/><ellipse cx="19.1" cy="15.6" rx="0.95" ry="1.2" fill="#d9aca2"/>
<ellipse cx="3.4" cy="27.6" rx="1.3" ry="1.25" fill="#d9aca2"/><ellipse cx="16.6" cy="27.6" rx="1.3" ry="1.25" fill="#d9aca2"/>
<path d="M10 0.8C5.5 0.8 2.3 2.8 1.9 6.5C1.7 9 1.9 12 1.8 15.5C1.7 19 1.6 21 2 23.3C2.8 27 5.8 28.9 10 28.9C14.2 28.9 17.2 27 18 23.3C18.4 21 18.3 19 18.2 15.5C18.1 12 18.3 9 18.1 6.5C17.7 2.8 14.5 0.8 10 0.8Z" fill="#72b7e4"/>
<circle cx="6.55" cy="8.9" r="2.8" fill="#fff"/><circle cx="13.45" cy="8.9" r="2.8" fill="#fff"/>
<circle cx="6.75" cy="9.05" r="1.3" fill="#0a0a0a"/><circle cx="13.4" cy="9.05" r="1.3" fill="#0a0a0a"/>
<ellipse cx="10" cy="11.9" rx="1.0" ry="0.85" fill="#1c1c24"/><rect x="9" y="13.7" width="2.1" height="1.3" rx="0.4" fill="#f4f4f0"/>
</svg>
<div class="t" style="left:1618.28px;top:57.77px;font-size:22.6px;transform:scaleX(1.0522);color:#cdcdcd;-webkit-text-stroke:0.7px #cdcdcd;">kube-scheduler/scheduler.go</div>
<svg class="a" style="left:1934.7px;top:63px" width="18" height="18" viewBox="-9 -9 18 18"><path d="M-7 -7L7 7M7 -7L-7 7" stroke="#6e7073" stroke-width="1.8"/></svg>
<div class="a" style="left:1966px;top:47px;width:2px;height:48px;background:#4b4d4f"></div>
<div class="a" style="left:1968px;top:47.5px;width:186px;height:46.8px;background:#3b3833"></div>
<svg class="a" style="left:1990px;top:57px" width="20.0" height="30.0" viewBox="0 0 20 30">
<circle cx="1.7" cy="5.3" r="1.7" fill="#72b7e4"/><circle cx="18.3" cy="5.3" r="1.7" fill="#72b7e4"/>
<ellipse cx="0.9" cy="15.6" rx="0.95" ry="1.2" fill="#d9aca2"/><ellipse cx="19.1" cy="15.6" rx="0.95" ry="1.2" fill="#d9aca2"/>
<ellipse cx="3.4" cy="27.6" rx="1.3" ry="1.25" fill="#d9aca2"/><ellipse cx="16.6" cy="27.6" rx="1.3" ry="1.25" fill="#d9aca2"/>
<path d="M10 0.8C5.5 0.8 2.3 2.8 1.9 6.5C1.7 9 1.9 12 1.8 15.5C1.7 19 1.6 21 2 23.3C2.8 27 5.8 28.9 10 28.9C14.2 28.9 17.2 27 18 23.3C18.4 21 18.3 19 18.2 15.5C18.1 12 18.3 9 18.1 6.5C17.7 2.8 14.5 0.8 10 0.8Z" fill="#72b7e4"/>
<circle cx="6.55" cy="8.9" r="2.8" fill="#fff"/><circle cx="13.45" cy="8.9" r="2.8" fill="#fff"/>
<circle cx="6.75" cy="9.05" r="1.3" fill="#0a0a0a"/><circle cx="13.4" cy="9.05" r="1.3" fill="#0a0a0a"/>
<ellipse cx="10" cy="11.9" rx="1.0" ry="0.85" fill="#1c1c24"/><rect x="9" y="13.7" width="2.1" height="1.3" rx="0.4" fill="#f4f4f0"/>
</svg>
<div class="t" style="left:2021.88px;top:57.77px;font-size:22.6px;transform:scaleX(1.0524);color:#cdcdcd;-webkit-text-stroke:0.7px #cdcdcd;">client.go</div>
<svg class="a" style="left:2122.7px;top:63px" width="18" height="18" viewBox="-9 -9 18 18"><path d="M-7 -7L7 7M7 -7L-7 7" stroke="#6e7073" stroke-width="1.8"/></svg>
<div class="a" style="left:2154px;top:47px;width:2px;height:48px;background:#4b4d4f"></div>
<div class="a" style="left:2156px;top:47.5px;width:232.5px;height:46.8px;background:#3b3833"></div>
<svg class="a" style="left:2178px;top:57px" width="20.0" height="30.0" viewBox="0 0 20 30">
<circle cx="1.7" cy="5.3" r="1.7" fill="#72b7e4"/><circle cx="18.3" cy="5.3" r="1.7" fill="#72b7e4"/>
<ellipse cx="0.9" cy="15.6" rx="0.95" ry="1.2" fill="#d9aca2"/><ellipse cx="19.1" cy="15.6" rx="0.95" ry="1.2" fill="#d9aca2"/>
<ellipse cx="3.4" cy="27.6" rx="1.3" ry="1.25" fill="#d9aca2"/><ellipse cx="16.6" cy="27.6" rx="1.3" ry="1.25" fill="#d9aca2"/>
<path d="M10 0.8C5.5 0.8 2.3 2.8 1.9 6.5C1.7 9 1.9 12 1.8 15.5C1.7 19 1.6 21 2 23.3C2.8 27 5.8 28.9 10 28.9C14.2 28.9 17.2 27 18 23.3C18.4 21 18.3 19 18.2 15.5C18.1 12 18.3 9 18.1 6.5C17.7 2.8 14.5 0.8 10 0.8Z" fill="#72b7e4"/>
<circle cx="6.55" cy="8.9" r="2.8" fill="#fff"/><circle cx="13.45" cy="8.9" r="2.8" fill="#fff"/>
<circle cx="6.75" cy="9.05" r="1.3" fill="#0a0a0a"/><circle cx="13.4" cy="9.05" r="1.3" fill="#0a0a0a"/>
<ellipse cx="10" cy="11.9" rx="1.0" ry="0.85" fill="#1c1c24"/><rect x="9" y="13.7" width="2.1" height="1.3" rx="0.4" fill="#f4f4f0"/>
</svg>
<div class="t" style="left:2209.78px;top:57.77px;font-size:22.6px;transform:scaleX(1.0394);color:#cdcdcd;-webkit-text-stroke:0.7px #cdcdcd;">interfaces.go</div>
<svg class="a" style="left:2357.2px;top:63px" width="18" height="18" viewBox="-9 -9 18 18"><path d="M-7 -7L7 7M7 -7L-7 7" stroke="#6e7073" stroke-width="1.8"/></svg>
<div class="a" style="left:2388.5px;top:47px;width:2px;height:48px;background:#4b4d4f"></div>
<div class="a" style="left:2390.5px;top:47.5px;width:209.5px;height:46.8px;background:#3b3833"></div>
<svg class="a" style="left:2412px;top:57px" width="20.0" height="30.0" viewBox="0 0 20 30">
<circle cx="1.7" cy="5.3" r="1.7" fill="#72b7e4"/><circle cx="18.3" cy="5.3" r="1.7" fill="#72b7e4"/>
<ellipse cx="0.9" cy="15.6" rx="0.95" ry="1.2" fill="#d9aca2"/><ellipse cx="19.1" cy="15.6" rx="0.95" ry="1.2" fill="#d9aca2"/>
<ellipse cx="3.4" cy="27.6" rx="1.3" ry="1.25" fill="#d9aca2"/><ellipse cx="16.6" cy="27.6" rx="1.3" ry="1.25" fill="#d9aca2"/>
<path d="M10 0.8C5.5 0.8 2.3 2.8 1.9 6.5C1.7 9 1.9 12 1.8 15.5C1.7 19 1.6 21 2 23.3C2.8 27 5.8 28.9 10 28.9C14.2 28.9 17.2 27 18 23.3C18.4 21 18.3 19 18.2 15.5C18.1 12 18.3 9 18.1 6.5C17.7 2.8 14.5 0.8 10 0.8Z" fill="#72b7e4"/>
<circle cx="6.55" cy="8.9" r="2.8" fill="#fff"/><circle cx="13.45" cy="8.9" r="2.8" fill="#fff"/>
<circle cx="6.75" cy="9.05" r="1.3" fill="#0a0a0a"/><circle cx="13.4" cy="9.05" r="1.3" fill="#0a0a0a"/>
<ellipse cx="10" cy="11.9" rx="1.0" ry="0.85" fill="#1c1c24"/><rect x="9" y="13.7" width="2.1" height="1.3" rx="0.4" fill="#f4f4f0"/>
</svg>
<div class="t" style="left:2444.28px;top:57.77px;font-size:22.6px;transform:scaleX(1.1351);color:#cdcdcd;-webkit-text-stroke:0.7px #cdcdcd;">mediator.go</div>
<svg class="a" style="left:2568.7px;top:63px" width="18" height="18" viewBox="-9 -9 18 18"><path d="M-7 -7L7 7M7 -7L-7 7" stroke="#6e7073" stroke-width="1.8"/></svg>
<div class="a" style="left:2600px;top:47px;width:2px;height:48px;background:#4b4d4f"></div>
<div class="a" style="left:610px;top:47px;width:2px;height:1091px;background:#323232"></div>
<div class="a" style="left:612px;top:149px;width:168px;height:3.1px;background:#313335"></div>
<div class="a" style="left:780px;top:149px;width:1704px;height:3.1px;background:#2b2b2b"></div>
<div class="a" style="left:612px;top:96px;width:1872px;height:54px;background:#3c3f41"></div>
<div class="a" style="left:612px;top:148.5px;width:1872px;height:1.5px;background:#37393b"></div>
<div class="a" style="left:632px;top:104px;width:674px;height:38px;background:#45494a;border:2px solid #646464;border-radius:6px"></div>
<svg class="a" style="left:637px;top:110px" width="40" height="28" viewBox="0 0 40 28"><circle cx="13" cy="12" r="9" stroke="#8a8e92" stroke-width="2" fill="none"/><path d="M19.5 18.5L25.5 25" stroke="#8e9092" stroke-width="2.6"/><path d="M25 11H34L29.5 16Z" fill="#8e9092"/></svg>
<div class="t" style="left:686.28px;top:107.17px;font-size:22.6px;transform:scaleX(1.0415);color:#d2d2d2;-webkit-text-stroke:0.7px #d2d2d2;">stopCh</div>
<svg class="a" style="left:1206px;top:110px" width="40" height="30" viewBox="1206 110 40 30"><path d="M1237 116.2V127.1H1219" stroke="#6c7174" stroke-width="2" fill="none"/><path d="M1211.8 127.1L1220.4 118.8V135.4Z" fill="#6c7174"/></svg>
<svg class="a" style="left:1272.8px;top:115px" width="18" height="18" viewBox="-9 -9 18 18"><path d="M-6.6 -6.6L6.6 6.6M6.6 -6.6L-6.6 6.6" stroke="#6e7073" stroke-width="1.8"/></svg>
<svg class="a" style="left:1330px;top:96px" width="400" height="54" viewBox="1330 96 400 54"><path d="M1354 134.6V113M1345.6 120.6L1354 112.2L1362.4 120.6" stroke="#afb1b3" stroke-width="4" fill="none"/><path d="M1405.8 110.2V132M1397.4 124L1405.8 132.4L1414.2 124" stroke="#afb1b3" stroke-width="4" fill="none"/><path d="M1448.6 126.5A10 10 0 1 1 1463.8 126.5" stroke="#afb1b3" stroke-width="4.2" fill="none"/><text x="1445.5" y="135.6" font-family="Liberation Sans,sans-serif" font-weight="bold" font-size="11.5" fill="#afb1b3" textLength="20.5" lengthAdjust="spacingAndGlyphs">ALL</text><path d="M1465.5 126.5L1472.5 133.5L1468.8 134L1467.6 137.4Z" fill="#afb1b3"/><path d="M1520 108V128M1509.6 118H1530.4" stroke="#afb1b3" stroke-width="4.6" fill="none"/><path d="M1525.8 122.8h6.2M1525.8 136.8h6.2" stroke="#afb1b3" stroke-width="2" stroke-dasharray="1.55 0.78"/><path d="M1528.8999999999999 123.8v12" stroke="#afb1b3" stroke-width="2" stroke-dasharray="1.5 0.9"/><path d="M1534.0 122.8h6.2M1534.0 136.8h6.2" stroke="#afb1b3" stroke-width="2" stroke-dasharray="1.55 0.78"/><path d="M1537.1 123.8v12" stroke="#afb1b3" stroke-width="2" stroke-dasharray="1.5 0.9"/><path d="M1561.8 117.8H1582.2" stroke="#afb1b3" stroke-width="4.6" fill="none"/><path d="M1577.8 122.8h6.2M1577.8 136.8h6.2" stroke="#afb1b3" stroke-width="2" stroke-dasharray="1.55 0.78"/><path d="M1580.8999999999999 123.8v12" stroke="#afb1b3" stroke-width="2" stroke-dasharray="1.5 0.9"/><path d="M1586.0 122.8h6.2M1586.0 136.8h6.2" stroke="#afb1b3" stroke-width="2" stroke-dasharray="1.55 0.78"/><path d="M1589.1 123.8v12" stroke="#afb1b3" stroke-width="2" stroke-dasharray="1.5 0.9"/><path d="M1627 118.5V125H1612.8V111.4H1624" stroke="#afb1b3" stroke-width="2.2" fill="none"/><path d="M1616 116.4L1620.6 121L1630.6 110.6" stroke="#afb1b3" stroke-width="2.8" fill="none"/><path d="M1629.8 122.8h6.2M1629.8 136.8h6.2" stroke="#afb1b3" stroke-width="2" stroke-dasharray="1.55 0.78"/><path d="M1632.8999999999999 123.8v12" stroke="#afb1b3" stroke-width="2" stroke-dasharray="1.5 0.9"/><path d="M1638.0 122.8h6.2M1638.0 136.8h6.2" stroke="#afb1b3" stroke-width="2" stroke-dasharray="1.55 0.78"/><path d="M1641.1 123.8v12" stroke="#afb1b3" stroke-width="2" stroke-dasharray="1.5 0.9"/><path d="M1681.8 110H1706.2L1696.6 122V134.2H1691.4V122Z" fill="#afb1b3"/><path d="M1700 133.8H1711.8L1705.9 139.6Z" fill="#d6d6d6"/></svg>
<div class="a" style="left:1490px;top:102px;width:2px;height:40px;background:#515355"></div>
<div class="a" style="left:1661px;top:102px;width:2px;height:40px;background:#515355"></div>
<div class="a" style="left:1757.5px;top:108px;width:28px;height:28px;background:#43494a;border:2px solid #6b6b6b;border-radius:4px"></div>
<div class="t" style="left:1797.28px;top:107.17px;font-size:22.6px;transform:scaleX(1.0407);color:#c8c8c8;-webkit-text-stroke:0.7px #c8c8c8;">Match Case</div>
<div class="a" style="left:1946px;top:108px;width:28px;height:28px;background:#43494a;border:2px solid #6b6b6b;border-radius:4px"></div>
<div class="t" style="left:1987.28px;top:107.17px;font-size:22.6px;transform:scaleX(1.0232);color:#c8c8c8;-webkit-text-stroke:0.7px #c8c8c8;">Words</div>
<div class="a" style="left:2078px;top:108px;width:28px;height:28px;background:#43494a;border:2px solid #6b6b6b;border-radius:4px"></div>
<div class="t" style="left:2117.28px;top:107.17px;font-size:22.6px;transform:scaleX(0.9675);color:#c8c8c8;-webkit-text-stroke:0.7px #c8c8c8;">Regex</div>
<div class="t" style="left:2199.20px;top:107.77px;font-size:22.6px;color:#4d8fe8;font-weight:bold;-webkit-text-stroke:0.5px #4d8fe8;">?</div>
<div class="t" style="left:2252.70px;top:109.57px;font-size:22.6px;transform:scaleX(1.0327);color:#cfcfcf;font-weight:bold;-webkit-text-stroke:0.5px #cfcfcf;">2 matches</div>
</div></body></html>
